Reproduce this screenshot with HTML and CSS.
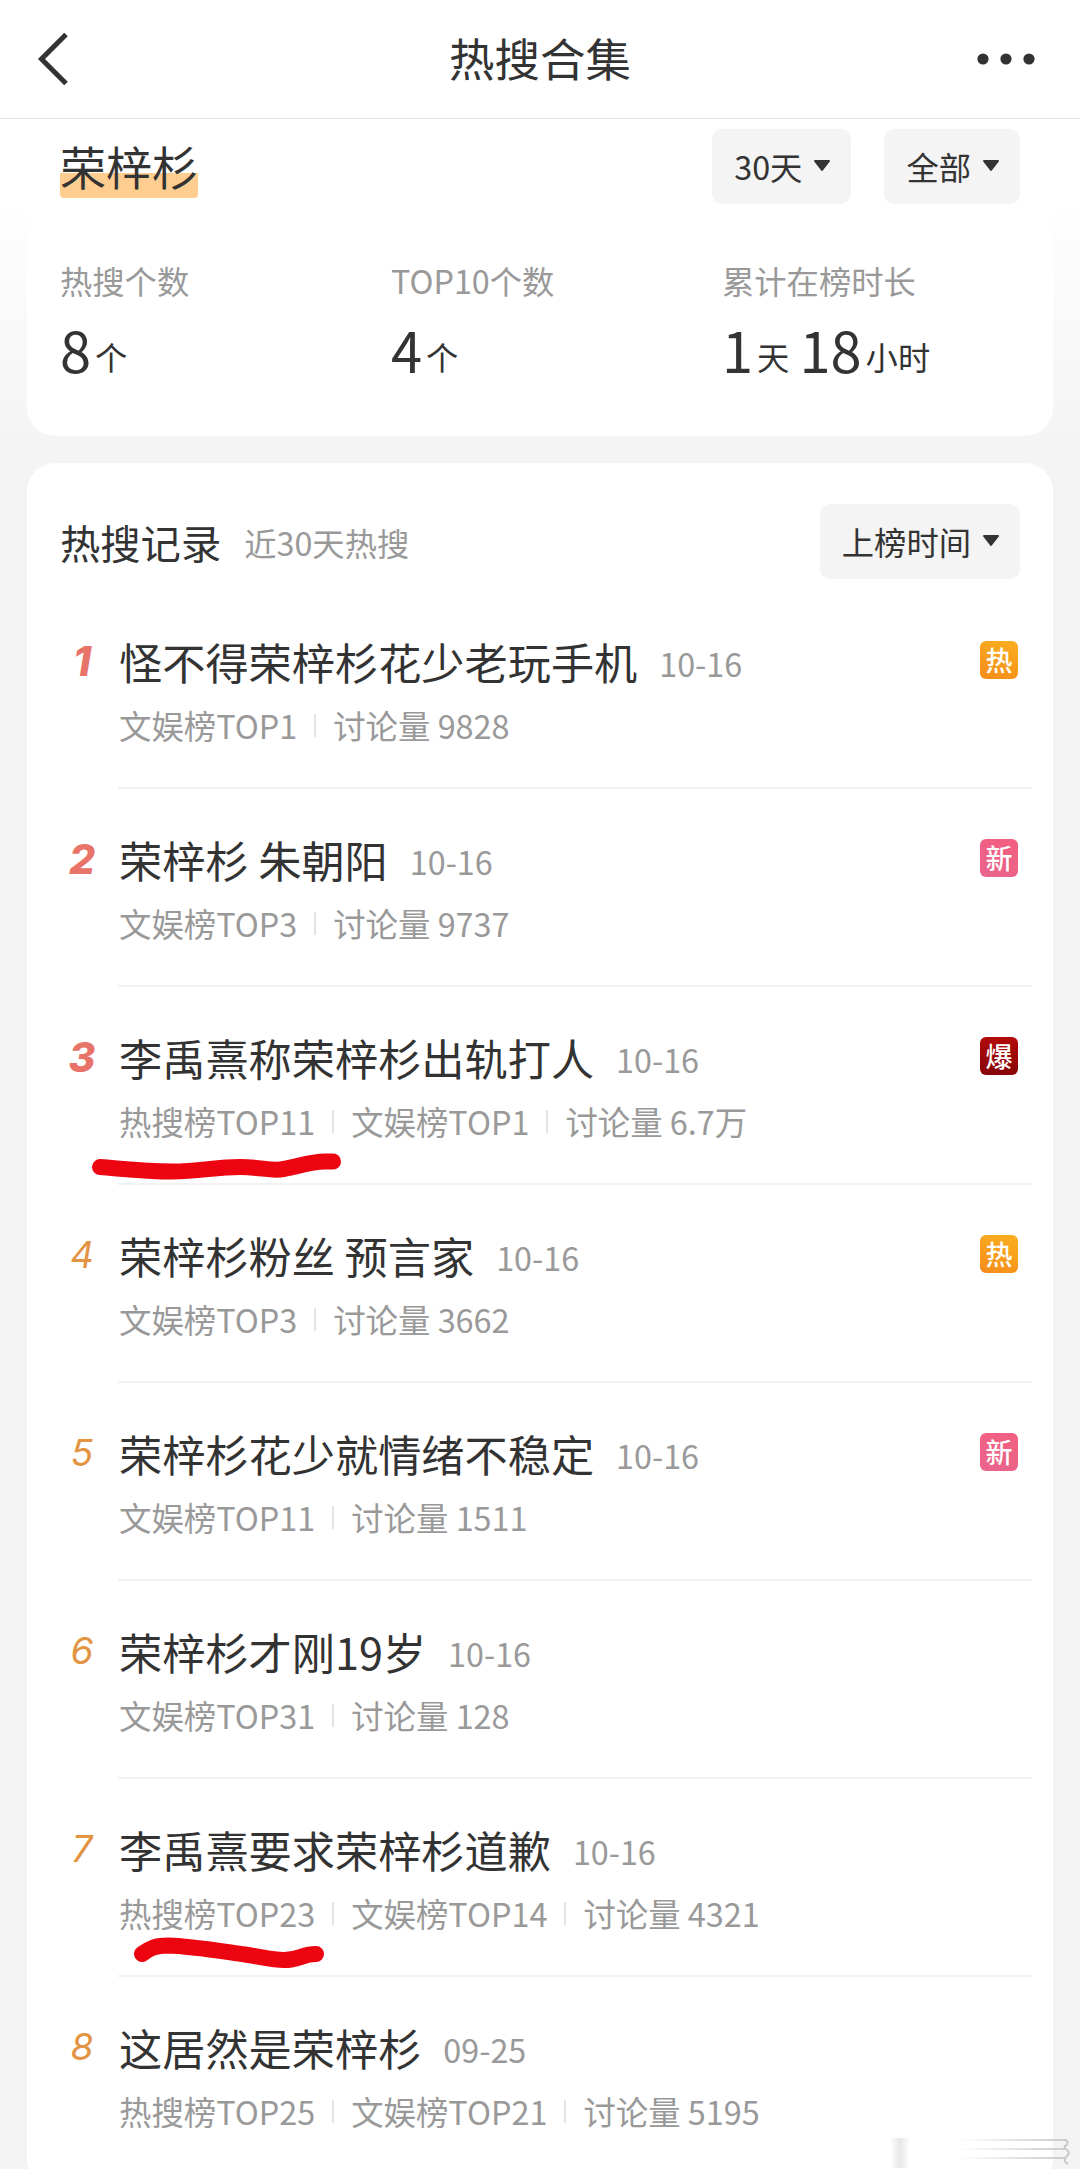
FILE: index.html
```html
<!DOCTYPE html>
<html lang="zh-CN">
<head>
<meta charset="utf-8">
<title>热搜合集</title>
<link rel="stylesheet" href="styles.css">
</head>
<body>
<header class="topbar">
  <svg class="back" width="40" height="60" viewBox="0 0 40 60"><path d="M34 5.500 9.500 30 34 54.500" fill="none" stroke="#333" stroke-width="5"/></svg>
  <h1 class="topbar-title">热搜合集</h1>
  <svg class="more" width="60" height="12" viewBox="0 0 60 12" fill="#333"><circle cx="7" cy="6" r="5.600"/><circle cx="30" cy="6" r="5.600"/><circle cx="53" cy="6" r="5.600"/></svg>
</header>
<main class="page">
  <section class="card summary">
    <div class="summary-head">
      <h2 class="name">荣梓杉</h2>
      <div class="filters">
        <button class="pill">30天<svg class="caret" width="18" height="12" viewBox="0 0 18 12"><path d="M2 1h14l-7 9z"/></svg></button>
        <button class="pill">全部<svg class="caret" width="18" height="12" viewBox="0 0 18 12"><path d="M2 1h14l-7 9z"/></svg></button>
      </div>
    </div>
    <div class="stats">
      <div class="stat"><div class="label">热搜个数</div><div class="value"><b>8</b><span>个</span></div></div>
      <div class="stat"><div class="label">TOP10个数</div><div class="value"><b>4</b><span>个</span></div></div>
      <div class="stat"><div class="label">累计在榜时长</div><div class="value"><b>1</b><span>天</span><b class="next">18</b><span>小时</span></div></div>
    </div>
  </section>
  <section class="card records">
    <div class="records-head">
      <h2 class="records-title">热搜记录</h2>
      <span class="range">近30天热搜</span>
      <button class="pill sort">上榜时间<svg class="caret" width="18" height="12" viewBox="0 0 18 12"><path d="M2 1h14l-7 9z"/></svg></button>
    </div>
    <ol class="list">
      <li class="row top"><span class="rank">1</span><div class="body"><div class="line"><span class="title">怪不得荣梓杉花少老玩手机</span><span class="date">10-16</span><span class="badge hot">热</span></div><div class="meta"><span>文娱榜TOP1</span><span>讨论量 9828</span></div></div></li>
      <li class="row top"><span class="rank">2</span><div class="body"><div class="line"><span class="title">荣梓杉 朱朝阳</span><span class="date">10-16</span><span class="badge new">新</span></div><div class="meta"><span>文娱榜TOP3</span><span>讨论量 9737</span></div></div></li>
      <li class="row top"><span class="rank">3</span><div class="body"><div class="line"><span class="title">李禹熹称荣梓杉出轨打人</span><span class="date">10-16</span><span class="badge boom">爆</span></div><div class="meta"><span>热搜榜TOP11</span><span>文娱榜TOP1</span><span>讨论量 6.7万</span></div></div></li>
      <li class="row"><span class="rank">4</span><div class="body"><div class="line"><span class="title">荣梓杉粉丝 预言家</span><span class="date">10-16</span><span class="badge hot">热</span></div><div class="meta"><span>文娱榜TOP3</span><span>讨论量 3662</span></div></div></li>
      <li class="row"><span class="rank">5</span><div class="body"><div class="line"><span class="title">荣梓杉花少就情绪不稳定</span><span class="date">10-16</span><span class="badge new">新</span></div><div class="meta"><span>文娱榜TOP11</span><span>讨论量 1511</span></div></div></li>
      <li class="row"><span class="rank">6</span><div class="body"><div class="line"><span class="title">荣梓杉才刚19岁</span><span class="date">10-16</span></div><div class="meta"><span>文娱榜TOP31</span><span>讨论量 128</span></div></div></li>
      <li class="row"><span class="rank">7</span><div class="body"><div class="line"><span class="title">李禹熹要求荣梓杉道歉</span><span class="date">10-16</span></div><div class="meta"><span>热搜榜TOP23</span><span>文娱榜TOP14</span><span>讨论量 4321</span></div></div></li>
      <li class="row"><span class="rank">8</span><div class="body"><div class="line"><span class="title">这居然是荣梓杉</span><span class="date">09-25</span></div><div class="meta"><span>热搜榜TOP25</span><span>文娱榜TOP21</span><span>讨论量 5195</span></div></div></li>
    </ol>
  </section>
</main>
<svg class="marks" width="1080" height="2178" viewBox="0 0 1080 2178">
  <path d="M100 1167C125 1169 145 1171.500 172 1171.500C200 1171.500 215 1167 240 1167C260 1167 268 1170.500 280 1169.500C295 1168 308 1161.500 325 1161.500H333"/>
  <path d="M142 1954C150 1948 156 1945.500 168 1945.500C190 1946 220 1951 245 1954.500C262 1957 272 1960 284 1960C300 1960 302 1954 316 1954"/>
</svg>
<svg class="smear" width="200" height="40" viewBox="0 0 200 40">
  <defs>
    <linearGradient id="spot"><stop offset="0" stop-color="#ddd" stop-opacity="0"/><stop offset=".5" stop-color="#ddd" stop-opacity=".7"/><stop offset="1" stop-color="#ddd" stop-opacity="0"/></linearGradient>
    <linearGradient id="streak"><stop offset="0" stop-color="#ccc" stop-opacity="0"/><stop offset="1" stop-color="#ccc"/></linearGradient>
  </defs>
  <rect x="12" y="8" width="20" height="30" fill="url(#spot)"/>
  <g fill="url(#streak)"><rect x="80" y="9" width="108" height="2"/><rect x="80" y="18" width="108" height="2"/><rect x="80" y="27" width="108" height="2"/></g>
  <path d="M186 10q5 0 3 5q-5 1 0 5q4 3-1 7q-3 5 2 7" fill="none" stroke="#c8c8c8" stroke-width="2"/>
</svg>
</body>
</html>
```

FILE: styles.css
```css
* { box-sizing: border-box; }
body {
  margin: 0;
  height: 2178px;
  overflow: hidden;
  position: relative;
  background: #fff;
  color: #333;
  font-family: "Noto Sans CJK SC", sans-serif;
  font-size: 32.300px;
}
h1, h2 { margin: 0; font-weight: 400; }
.topbar {
  height: 119px;
  display: flex;
  align-items: center;
  justify-content: space-between;
  padding: 0 44px 0 32px;
  border-bottom: 1px solid #e4e4e4;
}
.topbar-title { font-size: 45.500px; line-height: 60px; margin: 0 0 5px 32px; }
.page {
  height: 2050px;
  padding: 0 27px;
  background: linear-gradient(#fff 0, #fff 80px, #f4f4f4 320px);
  overflow: hidden;
}
.card { background: #fff; border-radius: 28px; }
.summary {
  height: 317px;
  padding: 10px 33px 0;
  margin-bottom: 27px;
  border-radius: 0 0 28px 28px;
}
.summary-head { display: flex; justify-content: space-between; align-items: flex-start; }
.name {
  font-size: 46px;
  line-height: 73px;
  height: 69px;
  background: linear-gradient(#ffcd90, #ffcd90) 0 100% / 100% 25px no-repeat;
  border-radius: 4px;
}
.filters { display: flex; gap: 33px; }
.pill {
  height: 75px;
  display: flex;
  align-items: center;
  gap: 11px;
  padding: 0 20px 2px 22px;
  border: 0;
  border-radius: 10px;
  background: #f4f4f4;
  color: #333;
  font: inherit;
}
.caret { fill: #333; stroke: #333; stroke-width: 2; stroke-linejoin: round; }
.stats { display: grid; grid-template-columns: 331px 331px 1fr; margin-top: 52px; }
.label { color: #999; line-height: 48px; }
.value { display: flex; align-items: baseline; line-height: 80px; margin-top: 5px; }
.value b { font-size: 56px; font-weight: 400; margin-right: 4px; }
.value span { position: relative; top: -3px; }
.value .next { margin-left: 10px; }
.records { height: 1724px; padding: 41px 21px 0 33px; }
.records-head { display: flex; align-items: center; }
.records-title { font-size: 40.300px; }
.range { color: #999; margin-left: 23px; }
.sort { margin-left: auto; margin-right: 12px; }
.list { list-style: none; margin: 12px 0 0; padding: 0; }
.row { height: 198px; display: flex; }
.rank {
  width: 58px;
  padding: 47px 14px 0 0;
  text-align: center;
  color: #e29443;
  font: italic 400 37px/46px Inter, sans-serif;
}
.top .rank { color: #e87469; font-weight: 800; font-size: 41px; }
.body { flex: 1; border-bottom: 2px solid #f2f2f2; padding: 38px 14px 0 1px; }
.row:last-child .body { border: 0; }
.line { display: flex; align-items: baseline; height: 64px; line-height: 64px; }
.title { font-size: 43.200px; }
.date { color: #999; margin-left: 22px; position: relative; top: -3px; }
.badge {
  margin: 12px 0 0 auto;
  align-self: flex-start;
  width: 38px;
  height: 38px;
  border-radius: 6px;
  color: #fff;
  font-size: 27px;
  font-weight: 500;
  line-height: 37px;
  text-align: center;
}
.hot { background: linear-gradient(200deg, #fbb020, #f48b1a); }
.new { background: linear-gradient(200deg, #f25f80, #e9648c); }
.boom { background: linear-gradient(#b30a0a, #860508); }
.meta { display: flex; color: #999; line-height: 48px; margin-top: 8px; font-size: 32.400px; }
.meta span + span { display: flex; align-items: center; white-space: pre; }
.meta span + span::before {
  content: "";
  width: 2px;
  height: 23px;
  margin: 0 17px;
  background: #e4e4e4;
}
.marks {
  position: absolute;
  left: 0;
  top: 0;
  fill: none;
  stroke: #ec0410;
  stroke-width: 16;
  stroke-linecap: round;
  stroke-linejoin: round;
}
.smear { position: absolute; left: 878px; top: 2130px; }
```
